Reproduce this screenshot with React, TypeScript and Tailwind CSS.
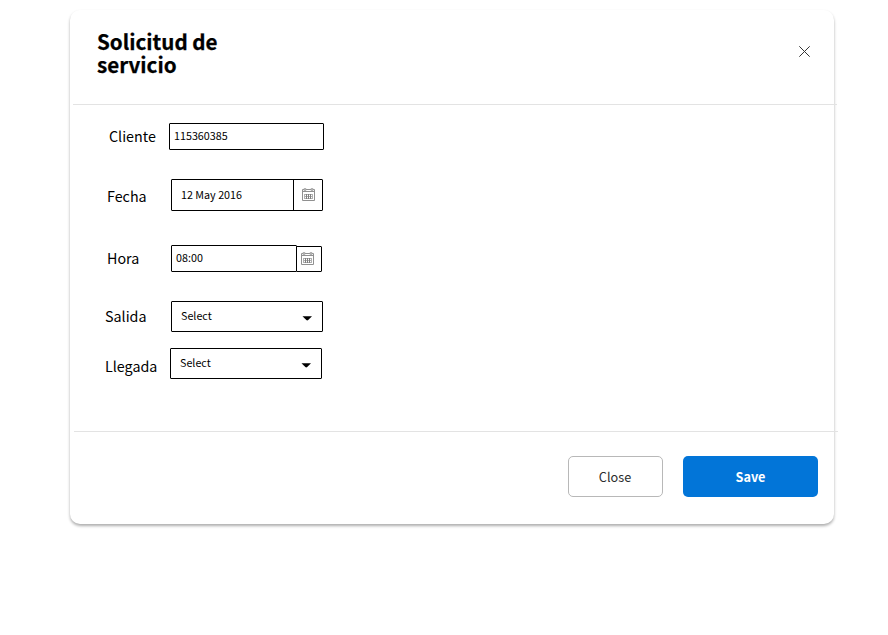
import type { ReactNode } from "react";

function CalendarIcon() {
  return (
    <svg width="13" height="13" viewBox="0 0 13 13" fill="none" strokeWidth="1">
      <path d="M0.5 1.5h12v11h-12z" stroke="#909090" />
      <path d="M2 0.5h2v2h-2zM9 0.5h2v2h-2z" fill="#b5b5b5" stroke="#a0a0a0" strokeWidth="0.6" />
      <path d="M1 3.5h11" stroke="#909090" />
      <path d="M2 6.5h9M2 8.5h9M2 10.5h9" stroke="#b0b0b0" />
      <path d="M4.5 6v5M6.5 6v5M8.5 6v5" stroke="#808080" />
      <path d="M10.5 6v5M2.5 6v5" stroke="#b0b0b0" />
    </svg>
  );
}

function Caret() {
  return (
    <svg width="10" height="5" viewBox="0 0 10 5">
      <path d="M0.5 0.3Q5.25 0 10 0.3L6.2 4Q5.25 4.8 4.3 4Z" fill="#000" />
    </svg>
  );
}

function Row({ className, labelClass, label, children }: { className: string; labelClass: string; label: string; children: ReactNode }) {
  return (
    <div className={`flex items-start ${className}`}>
      <label className={`shrink-0 text-[14.3px] leading-6 whitespace-nowrap ${labelClass}`}>{label}</label>
      {children}
    </div>
  );
}

const box = "flex shrink-0 items-center rounded-[1px] border border-black bg-white text-[10.75px] leading-4";

export default function App() {
  return (
    <div className="h-[635px] overflow-hidden bg-white pt-[10px] pl-[70px] font-['Noto_Sans_CJK_SC',sans-serif] text-black">
      <section className="flex h-[514px] w-[764px] flex-col rounded-[10px] bg-white shadow-[0_2px_3px_rgba(0,0,0,0.32)]">
        <header className="flex h-[94px] shrink-0 items-start justify-between pt-[20px] pr-6 pl-[27px]">
          <h1 className="w-[160px] text-[20.6px] leading-[23px] font-bold [-webkit-text-stroke:0.25px_#000]">Solicitud de servicio</h1>
          <button className="mt-4" aria-label="Close dialog">
            <svg width="11" height="11" viewBox="0 0 11 11" stroke="#333" strokeWidth="1">
              <path d="M0.3 0.3L10.7 10.7M10.7 0.3L0.3 10.7" />
            </svg>
          </button>
        </header>
        <hr className="ml-[3px] w-[764px] shrink-0 border-t border-[#e3e3e3]" />
        <main className="flex h-[326px] shrink-0 flex-col pt-[18px]">
          <Row className="h-14 pl-[39px]" labelClass="mt-[1px] w-[60px]" label="Cliente">
            <div className={`${box} h-[27px] w-[155px] pb-[1px] pl-1`}>115360385</div>
          </Row>
          <Row className="h-[66px] pl-[37px]" labelClass="mt-[5px] w-16" label="Fecha">
            <div className={`${box} h-8 w-[152px]`}>
              <span className="w-[121px] pl-[9px]">12 May 2016</span>
              <span className="flex h-full flex-1 items-center border-l border-black pb-[1px] pl-2"><CalendarIcon /></span>
            </div>
          </Row>
          <Row className="h-14 pl-[37px]" labelClass="mt-[1px] w-16" label="Hora">
            <div className={`${box} h-[27px] w-[126px] pb-[1px] pl-1`}>08:00</div>
            <div className={`${box} mt-[1px] -ml-[1px] h-[26px] w-[26px] pb-[1px] pl-1`}><CalendarIcon /></div>
          </Row>
          <Row className="h-[47px] pl-[35px]" labelClass="mt-[3px] w-[66px]" label="Salida">
            <div className={`${box} h-[31px] w-[152px] justify-between pr-[10px] pb-[1px] pl-[9px]`}>
              Select<span className="mt-[4px]"><Caret /></span>
            </div>
          </Row>
          <Row className="h-[47px] pl-[35px]" labelClass="mt-[6px] w-[65px]" label="Llegada">
            <div className={`${box} h-[31px] w-[152px] justify-between pr-[10px] pb-[1px] pl-[9px]`}>
              Select<span className="mt-[4px]"><Caret /></span>
            </div>
          </Row>
        </main>
        <hr className="ml-1 w-[764px] shrink-0 border-t border-[#e3e3e3]" />
        <footer className="flex justify-end gap-5 pt-6 pr-4">
          <button className="h-[41px] w-[95px] rounded-[5px] border border-[#b8b8b8] pr-px text-[12.7px] text-[#292b2c]">Close</button>
          <button className="h-[41px] w-[135px] rounded-[5px] bg-[#0275d8] text-[12.7px] font-bold text-white">Save</button>
        </footer>
      </section>
    </div>
  );
}
